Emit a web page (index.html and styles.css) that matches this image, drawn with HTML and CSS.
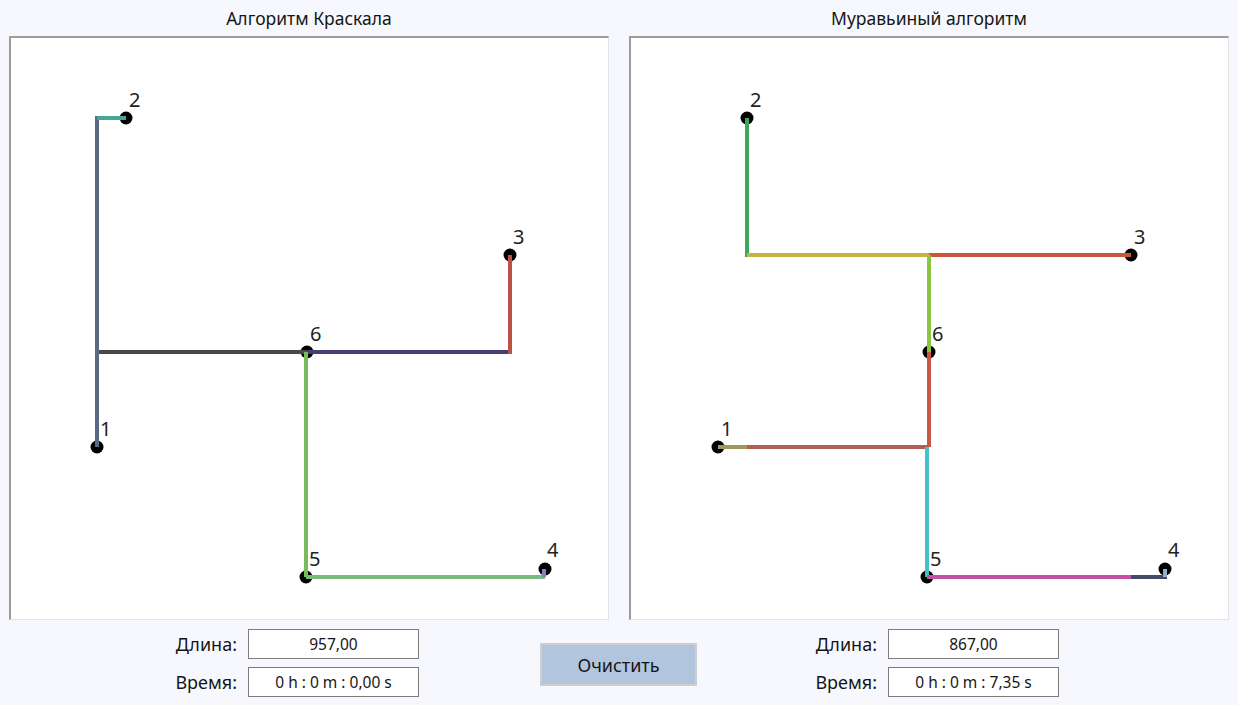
FILE: index.html
```html
<!DOCTYPE html>
<html lang="ru">
<head>
<meta charset="utf-8">
<title>Алгоритмы</title>
<link rel="stylesheet" href="styles.css">
</head>
<body>
<div class="app">
  <div class="panels">
    <section class="panel">
      <h2 class="title">Алгоритм Краскала</h2>
      <div class="canvas">
        <svg viewBox="11 38 597 581" width="597" height="581">
          <g class="nodes">
            <circle cx="97" cy="447" r="6.5"/>
            <circle cx="126" cy="118" r="6.5"/>
            <circle cx="510" cy="255" r="6.5"/>
            <circle cx="545" cy="569" r="6.5"/>
            <circle cx="306" cy="577" r="6.5"/>
            <circle cx="307" cy="352" r="6.5"/>
          </g>
          <g class="edges">
            <line x1="97" y1="447" x2="97" y2="116" stroke="#5a6a82"/>
            <line x1="97" y1="118" x2="126" y2="118" stroke="#47a695"/>
            <line x1="99" y1="352" x2="307" y2="352" stroke="#4d4746"/>
            <line x1="307" y1="352" x2="510" y2="352" stroke="#443f70"/>
            <line x1="510" y1="354" x2="510" y2="255" stroke="#bf5047"/>
            <line x1="306" y1="352" x2="306" y2="577" stroke="#7aba5e"/>
            <line x1="306" y1="577" x2="545" y2="577" stroke="#74bb7c"/>
            <line x1="544" y1="577" x2="544" y2="569" stroke="#8e7db6"/>
          </g>
          <g class="labels">
            <text x="100" y="436">1</text>
            <text x="129" y="107">2</text>
            <text x="513" y="244">3</text>
            <text x="547" y="557">4</text>
            <text x="309" y="566">5</text>
            <text x="310" y="341">6</text>
          </g>
        </svg>
      </div>
    </section>
    <section class="panel">
      <h2 class="title">Муравьиный алгоритм</h2>
      <div class="canvas">
        <svg viewBox="631 38 597 581" width="597" height="581">
          <g class="nodes">
            <circle cx="718" cy="447" r="6.5"/>
            <circle cx="747" cy="118" r="6.5"/>
            <circle cx="1131" cy="255" r="6.5"/>
            <circle cx="1165" cy="569" r="6.5"/>
            <circle cx="927" cy="577" r="6.5"/>
            <circle cx="929" cy="352" r="6.5"/>
          </g>
          <g class="edges">
            <line x1="747" y1="118" x2="747" y2="257" stroke="#3ea75d"/>
            <line x1="747" y1="255" x2="929" y2="255" stroke="#c4b543"/>
            <line x1="929" y1="255" x2="1131" y2="255" stroke="#cb553b"/>
            <line x1="929" y1="255" x2="929" y2="352" stroke="#8cc540"/>
            <line x1="929" y1="352" x2="929" y2="447" stroke="#c85843"/>
            <line x1="718" y1="447" x2="747" y2="447" stroke="#9c9a56"/>
            <line x1="747" y1="447" x2="929" y2="447" stroke="#b55c56"/>
            <line x1="927" y1="447" x2="927" y2="577" stroke="#45c0c8"/>
            <line x1="927" y1="577" x2="1131" y2="577" stroke="#c44fa6"/>
            <line x1="1131" y1="577" x2="1167" y2="577" stroke="#434a66"/>
            <line x1="1165" y1="577" x2="1165" y2="569" stroke="#8fb0c8"/>
          </g>
          <g class="labels">
            <text x="721" y="436">1</text>
            <text x="750" y="107">2</text>
            <text x="1134" y="244">3</text>
            <text x="1168" y="557">4</text>
            <text x="930" y="566">5</text>
            <text x="932" y="341">6</text>
          </g>
        </svg>
      </div>
    </section>
  </div>
  <div class="controls">
    <div class="stats stats-left">
      <span class="lbl">Длина:</span><div class="field">957,00</div>
      <span class="lbl">Время:</span><div class="field">0 h : 0 m : 0,00 s</div>
    </div>
    <button class="btn" type="button">Очистить</button>
    <div class="stats stats-right">
      <span class="lbl">Длина:</span><div class="field">867,00</div>
      <span class="lbl">Время:</span><div class="field">0 h : 0 m : 7,35 s</div>
    </div>
  </div>
</div>
</body>
</html>
```
FILE: styles.css
```css
html, body {
  margin: 0;
  padding: 0;
}
body {
  background: #f6f8fd;
  font-family: "Noto Sans", "Open Sans", sans-serif;
  color: #161616;
  width: 1238px;
  height: 705px;
  overflow: hidden;
}
.panels {
  display: flex;
  gap: 20px;
  padding-left: 9px;
}
.panel {
  width: 600px;
}
.title {
  margin: 0;
  height: 36px;
  line-height: 36px;
  text-align: center;
  font-weight: normal;
  font-size: 17.5px;
}
.canvas {
  height: 584px;
  box-sizing: border-box;
  background: #ffffff;
  border-top: 2px solid #9c9c9c;
  border-left: 2px solid #9c9c9c;
  border-right: 1px solid #e3e3e3;
  border-bottom: 1px solid #e3e3e3;
}
.canvas svg {
  display: block;
}
.nodes circle {
  fill: #000;
}
.edges line {
  stroke-width: 4;
}
.labels text {
  font-family: "Noto Sans", sans-serif;
  font-size: 20px;
  fill: #222;
}
.controls {
  display: flex;
  align-items: flex-start;
  padding-top: 9px;
}
.stats {
  display: grid;
  grid-template-columns: 77px 171px;
  column-gap: 11px;
  row-gap: 8px;
  align-items: center;
}
.stats-left {
  margin-left: 160px;
}
.stats-right {
  margin-left: 104px;
  grid-template-columns: 76px 171px;
}
.lbl {
  text-align: right;
  font-size: 18px;
}
.field {
  height: 30px;
  box-sizing: border-box;
  border: 1px solid #7c7c7c;
  background: #fff;
  text-align: center;
  font-size: 15.5px;
  line-height: 28px;
}
.btn {
  margin-left: 121px;
  margin-top: 14px;
  width: 157px;
  height: 43px;
  box-sizing: border-box;
  border: 2px solid #cdcdcd;
  outline: none;
  background: #b2c5df;
  font-family: "Noto Sans", sans-serif;
  font-size: 18px;
  color: #161616;
  padding: 0;
}
```
